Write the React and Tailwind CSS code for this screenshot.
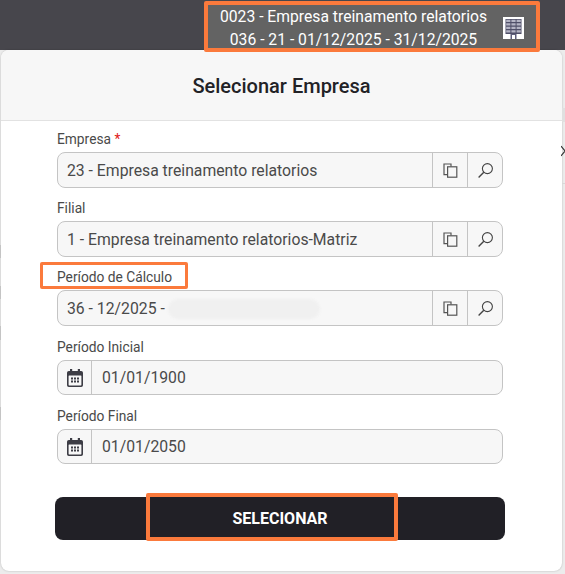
import React from 'react';

const CopyIcon = () => (
  <svg width="15" height="15" viewBox="0 0 15 15" fill="none" stroke="#555555" strokeWidth="1.2">
    <path d="M4.2 11.6H1V1h7v2.4" />
    <rect x="4.6" y="3.8" width="9.2" height="10.4" />
  </svg>
);

const SearchIcon = () => (
  <svg width="17" height="17" viewBox="0 0 17 17" fill="none" stroke="#444444" strokeWidth="1.1">
    <circle cx="10.4" cy="6.6" r="5" />
    <path d="M6.8 10.2 1.6 15.4" strokeWidth="1.4" />
  </svg>
);

const CalendarIcon = () => (
  <svg width="16" height="18" viewBox="0 0 16 18" fill="#3d3d45">
    <path d="M3 0h2.2v2h5.6V0H13v2h1.2A1.8 1.8 0 0 1 16 3.8v12.4a1.8 1.8 0 0 1-1.8 1.8H1.8A1.8 1.8 0 0 1 0 16.2V3.8A1.8 1.8 0 0 1 1.8 2H3V0Z" />
    <rect x="1.6" y="6.4" width="12.8" height="10" rx="0.6" fill="#f7f7f7" />
    <path d="M4 8.6h2v1.8H4zM7 8.6h2v1.8H7zM10 8.6h2v1.8h-2zM4 11.6h2v1.8H4zM7 11.6h2v1.8H7zM10 11.6h2v1.8h-2z" />
  </svg>
);

const BuildingIcon = () => (
  <svg width="21" height="22" viewBox="0 0 21 22">
    <rect width="21" height="22" fill="#ffffff" />
    <rect x="2.5" y="2" width="16" height="15" fill="#4f4f68" />
    <path
      d="M3.2 2.7h4.2v2.3H3.2zM8.4 2.7h4.2v2.3H8.4zM13.6 2.7h4.2v2.3h-4.2zM3.2 6.2h4.2v2.3H3.2zM8.4 6.2h4.2v2.3H8.4zM13.6 6.2h4.2v2.3h-4.2zM3.2 9.7h4.2V12H3.2zM8.4 9.7h4.2V12H8.4zM13.6 9.7h4.2V12h-4.2zM3.2 13.2h4.2v2.3H3.2zM8.4 13.2h4.2v2.3H8.4zM13.6 13.2h4.2v2.3h-4.2z"
      fill="#b4b4c4"
    />
    <rect x="7.5" y="17" width="6" height="5" fill="#5f5f7c" />
    <rect x="9" y="18" width="3" height="4" fill="#ffffff" />
  </svg>
);

const LookupField = ({ label, required, children }) => (
  <div className="flex flex-col">
    <label className="h-[18px] text-[13.75px] leading-[20px] text-[#4a4a4a]">
      {label}
      {required && <span className="text-[#e02020]"> *</span>}
    </label>
    <div className="mt-[5px] flex h-[36px] items-stretch rounded-lg border border-[#c4c4c4] bg-[#f7f7f7]">
      <div className="flex flex-1 items-center px-[9px] pt-px text-[15.75px] text-[#4a4a4a]">{children}</div>
      <button className="flex w-[35px] items-center justify-center border-l border-[#c4c4c4]">
        <CopyIcon />
      </button>
      <button className="flex w-[35px] items-center justify-center border-l border-[#c4c4c4]">
        <SearchIcon />
      </button>
    </div>
  </div>
);

const DateField = ({ label, value }) => (
  <div className="flex flex-col">
    <label className="h-[18px] text-[13.75px] leading-[22px] text-[#4a4a4a]">{label}</label>
    <div className="mt-[6px] flex h-[35px] items-stretch rounded-lg border border-[#c4c4c4] bg-[#f7f7f7]">
      <div className="flex w-[34px] items-center justify-center border-r border-[#c4c4c4]">
        <CalendarIcon />
      </div>
      <div className="flex flex-1 items-center px-[10px] pt-px text-[15.75px] text-[#4a4a4a]">{value}</div>
    </div>
  </div>
);

export default function App() {
  return (
    <div className="relative flex h-[574px] w-[565px] flex-col overflow-hidden bg-[#ececec] font-['Roboto',sans-serif]">
      {/* Top bar */}
      <div className="flex h-[50px] shrink-0 justify-end bg-[#47464c] pr-[25px] pt-[1px]">
        <div className="relative z-10 flex h-[51px] w-[336px] shrink-0 items-center rounded-[2px] border-4 border-[#fb7a3c] bg-[#636363] pl-[10px] pr-[12px] text-white">
          <div className="flex flex-1 flex-col items-center pt-[3px] text-[15.7px] leading-[23px]">
            <span>0023 - Empresa treinamento relatorios</span>
            <span>036 - 21 - 01/12/2025 - 31/12/2025</span>
          </div>
          <div className="ml-[14px] mt-[3px]">
            <BuildingIcon />
          </div>
        </div>
      </div>

      {/* Modal */}
      <div className="ml-px flex h-[521px] w-[561px] flex-col overflow-hidden rounded-lg bg-white shadow-[0_0_2px_rgba(0,0,0,0.25)]">
        <div className="flex h-[71px] shrink-0 items-center justify-center border-b border-[#e2e2e2] bg-[#f7f7f7] pt-px text-[20px] font-medium text-[#222226]">
          Selecionar Empresa
        </div>
        <div className="flex flex-col gap-[10px] pl-[56px] pr-[59px] pt-[8px]">
          <LookupField label="Empresa" required>
            23 - Empresa treinamento relatorios
          </LookupField>
          <LookupField label="Filial">1 - Empresa treinamento relatorios-Matriz</LookupField>
          <LookupField label="Período de Cálculo">
            36 - 12/2025 -
            <span className="ml-[3px] h-[20px] w-[152px] rounded-full bg-[#f0f0f0] blur-[1px]" />
          </LookupField>
          <DateField label="Período Inicial" value="01/01/1900" />
          <DateField label="Período Final" value="01/01/2050" />
        </div>
        <div className="pl-[54px] pr-[57px] pt-[33px]">
          <button className="flex h-[43px] w-full items-center justify-center rounded-lg bg-[#212026] text-[16px] font-bold text-white">
            SELECIONAR
          </button>
        </div>
      </div>

      {/* Annotation boxes */}
      <div className="absolute left-[40px] top-[262px] h-[27px] w-[148px] rounded-[2px] border-[3px] border-[#fb7a3c]" />
      <div className="absolute left-[146px] top-[493px] h-[48px] w-[252px] rounded-[2px] border-4 border-[#fb7a3c]" />

      {/* Bits of the page behind the modal */}
      <div className="absolute left-[562px] top-[108px] h-[14px] w-[3px] bg-[#e0e0e0]" />
      <div className="absolute left-[562px] top-[183px] h-px w-[3px] bg-[#d8d8d8]" />
      <svg className="absolute left-[561px] top-[145px]" width="4" height="12" viewBox="0 0 4 12" fill="none" stroke="#333333" strokeWidth="1.2">
        <path d="M0 1 4 6 0 11" />
      </svg>
      <div className="absolute left-0 top-[245px] h-[13px] w-px bg-[#c4c4c4]" />
      <div className="absolute left-0 top-[286px] h-[13px] w-px bg-[#c4c4c4]" />
      <div className="absolute left-0 top-[326px] h-[14px] w-px bg-[#c4c4c4]" />
      <div className="absolute left-0 top-[407px] h-[13px] w-px bg-[#c4c4c4]" />
    </div>
  );
}
